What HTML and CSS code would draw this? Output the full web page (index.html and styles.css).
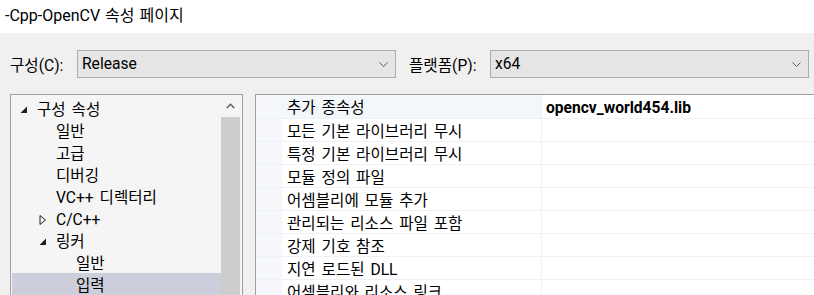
FILE: index.html
```html
<!DOCTYPE html>
<html lang="ko">
<head>
<meta charset="UTF-8">
<title>-Cpp-OpenCV 속성 페이지</title>
<link rel="stylesheet" href="styles.css">
</head>
<body>
    <div class="titlebar">-Cpp-OpenCV 속성 페이지</div>

    <div class="config_row">
        <span class="label label_config">구성(C):</span>
        <div class="combo">
            <span>Release</span>
            <svg class="combo_arrow" width="9" height="5" viewBox="0 0 9 5"><path d="M0.5 0.5 L4.5 4.5 L8.5 0.5" fill="none" stroke="#606060" stroke-width="1"/></svg>
        </div>
        <span class="label label_platform">플랫폼(P):</span>
        <div class="combo">
            <span>x64</span>
            <svg class="combo_arrow" width="9" height="5" viewBox="0 0 9 5"><path d="M0.5 0.5 L4.5 4.5 L8.5 0.5" fill="none" stroke="#606060" stroke-width="1"/></svg>
        </div>
    </div>

    <div class="panels">
        <div class="tree_panel">
            <ul class="tree">
                <li class="tree_item lvl0"><svg class="twisty" width="8" height="8" viewBox="0 0 8 8"><path d="M7 0.5 L7 7 L0.5 7 Z" fill="#1e1e1e"/></svg>구성 속성</li>
                <li class="tree_item lvl1">일반</li>
                <li class="tree_item lvl1">고급</li>
                <li class="tree_item lvl1">디버깅</li>
                <li class="tree_item lvl1">VC++ 디렉터리</li>
                <li class="tree_item lvl1 has_twisty"><svg class="twisty" width="8" height="10" viewBox="0 0 8 10"><path d="M1 0.5 L6.5 5 L1 9.5 Z" fill="none" stroke="#1e1e1e" stroke-width="1"/></svg>C/C++</li>
                <li class="tree_item lvl1 has_twisty"><svg class="twisty" width="8" height="8" viewBox="0 0 8 8"><path d="M7 0.5 L7 7 L0.5 7 Z" fill="#1e1e1e"/></svg>링커</li>
                <li class="tree_item lvl2">일반</li>
                <li class="tree_item lvl2 selected">입력</li>
            </ul>
            <div class="scrollbar">
                <div class="scroll_btn">
                    <svg width="9" height="6" viewBox="0 0 9 6"><path d="M0.8 5 L4.5 1.3 L8.2 5" fill="none" stroke="#606060" stroke-width="1.6"/></svg>
                </div>
                <div class="scroll_thumb"></div>
            </div>
        </div>

        <div class="grid_panel">
            <div class="grid_row current">
                <div class="gutter"></div>
                <div class="prop_name">추가 종속성</div>
                <div class="prop_value bold">opencv_world454.lib</div>
            </div>
            <div class="grid_row">
                <div class="gutter"></div>
                <div class="prop_name">모든 기본 라이브러리 무시</div>
                <div class="prop_value"></div>
            </div>
            <div class="grid_row">
                <div class="gutter"></div>
                <div class="prop_name">특정 기본 라이브러리 무시</div>
                <div class="prop_value"></div>
            </div>
            <div class="grid_row">
                <div class="gutter"></div>
                <div class="prop_name">모듈 정의 파일</div>
                <div class="prop_value"></div>
            </div>
            <div class="grid_row">
                <div class="gutter"></div>
                <div class="prop_name">어셈블리에 모듈 추가</div>
                <div class="prop_value"></div>
            </div>
            <div class="grid_row">
                <div class="gutter"></div>
                <div class="prop_name">관리되는 리소스 파일 포함</div>
                <div class="prop_value"></div>
            </div>
            <div class="grid_row">
                <div class="gutter"></div>
                <div class="prop_name">강제 기호 참조</div>
                <div class="prop_value"></div>
            </div>
            <div class="grid_row">
                <div class="gutter"></div>
                <div class="prop_name">지연 로드된 DLL</div>
                <div class="prop_value"></div>
            </div>
            <div class="grid_row">
                <div class="gutter"></div>
                <div class="prop_name">어셈블리와 리소스 링크</div>
                <div class="prop_value"></div>
            </div>
        </div>
    </div>
</body>
</html>
```

FILE: styles.css
```css
body{
    margin: 0px;
    width: 814px;
    height: 295px;
    overflow: hidden;
    background-color: #f0f0f0;
    font-family: Roboto, "Noto Sans CJK KR", sans-serif;
    font-size: 15.6px;
    word-spacing: 2px;
    color: #000;
}
.titlebar{
    height: 33px;
    line-height: 32px;
    background-color: #fff;
    padding-left: 5px;
    font-size: 16px;
    word-spacing: 1px;
}
.config_row{
    display: flex;
    align-items: center;
    margin-top: 17px;
    height: 28px;
}
.label{
    white-space: nowrap;
}
.label_config{
    margin-left: 10px;
    width: 67px;
}
.label_platform{
    margin-left: 13px;
    width: 81px;
}
.combo{
    box-sizing: border-box;
    width: 319px;
    height: 28px;
    display: flex;
    align-items: center;
    justify-content: space-between;
    background-color: #e5e5e5;
    border: 1px solid #adadad;
    padding: 0 7px 0 4px;
}
.combo_arrow{
    display: block;
}
.panels{
    display: flex;
    margin-top: 16px;
    height: 300px;
}
.tree_panel{
    box-sizing: border-box;
    width: 233px;
    margin-left: 10px;
    border: 1px solid #a0a0a0;
    background-color: #f5f5f5;
    display: flex;
}
.tree{
    list-style: none;
    margin: 0;
    padding: 2px 0 0 1px;
    flex: 1;
}
.tree_item{
    box-sizing: border-box;
    height: 22px;
    padding-top: 4px;
    line-height: 18px;
    white-space: nowrap;
    display: flex;
    align-items: center;
}
.twisty{
    display: block;
    margin-right: 9px;
}
.lvl0{
    padding-left: 8px;
}
.lvl1{
    padding-left: 44px;
}
.lvl1.has_twisty{
    padding-left: 27px;
}
.lvl2{
    padding-left: 64px;
}
.selected{
    background-color: #cccedb;
}
.scrollbar{
    width: 19px;
    margin-right: 2px;
    display: flex;
    flex-direction: column;
}
.scroll_btn{
    height: 22px;
    display: flex;
    align-items: center;
    justify-content: center;
}
.scroll_thumb{
    flex: 1;
    background-color: #cdcdcd;
}
.grid_panel{
    flex: 1;
    margin-left: 12px;
    border-top: 1px solid #a0a0a0;
    border-left: 1px solid #a0a0a0;
    background-color: #fff;
}
.grid_row{
    display: flex;
    height: 22px;
    line-height: 18px;
    border-bottom: 1px solid #eef1f7;
}
.grid_row:first-child{
    height: 23px;
}
.gutter{
    width: 26px;
    background-color: #f5f7fb;
}
.prop_name, .prop_value{
    padding-top: 4px;
    white-space: nowrap;
}
.prop_name{
    width: 254px;
    padding-left: 5px;
    border-right: 1px solid #eef1f7;
}
.current .prop_name{
    background-color: #f3f6fb;
}
.prop_value{
    flex: 1;
    padding-left: 4px;
}
.bold{
    font-weight: bold;
}
```
